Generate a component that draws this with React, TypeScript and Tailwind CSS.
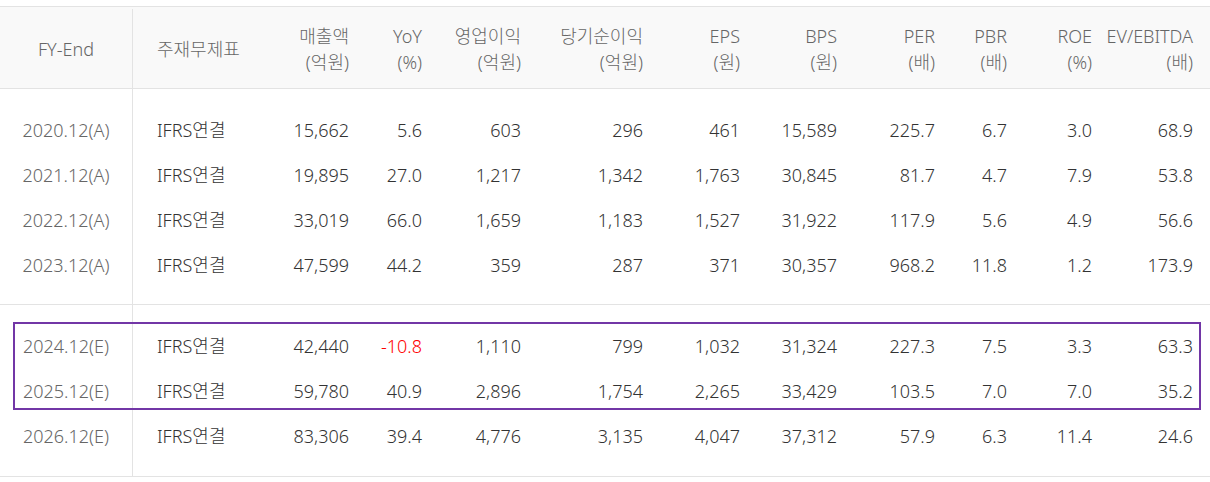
import React from "react";

const gridCols = "grid grid-cols-[133px_127px_89px_73px_99px_122px_97px_97px_98px_72px_85px_101px_17px]";

const headers: [string, string][] = [
  ["FY-End", ""],
  ["주재무제표", ""],
  ["매출액", "(억원)"],
  ["YoY", "(%)"],
  ["영업이익", "(억원)"],
  ["당기순이익", "(억원)"],
  ["EPS", "(원)"],
  ["BPS", "(원)"],
  ["PER", "(배)"],
  ["PBR", "(배)"],
  ["ROE", "(%)"],
  ["EV/EBITDA", "(배)"],
];

type Row = string[];
const groupA: Row[] = [
  ["2020.12(A)", "IFRS연결", "15,662", "5.6", "603", "296", "461", "15,589", "225.7", "6.7", "3.0", "68.9"],
  ["2021.12(A)", "IFRS연결", "19,895", "27.0", "1,217", "1,342", "1,763", "30,845", "81.7", "4.7", "7.9", "53.8"],
  ["2022.12(A)", "IFRS연결", "33,019", "66.0", "1,659", "1,183", "1,527", "31,922", "117.9", "5.6", "4.9", "56.6"],
  ["2023.12(A)", "IFRS연결", "47,599", "44.2", "359", "287", "371", "30,357", "968.2", "11.8", "1.2", "173.9"],
];
const groupB: Row[] = [
  ["2024.12(E)", "IFRS연결", "42,440", "-10.8", "1,110", "799", "1,032", "31,324", "227.3", "7.5", "3.3", "63.3"],
  ["2025.12(E)", "IFRS연결", "59,780", "40.9", "2,896", "1,754", "2,265", "33,429", "103.5", "7.0", "7.0", "35.2"],
  ["2026.12(E)", "IFRS연결", "83,306", "39.4", "4,776", "3,135", "4,047", "37,312", "57.9", "6.3", "11.4", "24.6"],
];

function DataRow({ r }: { r: Row }) {
  return (
    <div className={`${gridCols} h-[45px] items-center text-[18px] text-[#333]`}>
      <div className="text-center text-[#666] border-r border-[#e3e3e3] h-full flex items-center justify-center">{r[0]}</div>
      <div className="pl-[24px]">{r[1]}</div>
      {r.slice(2).map((v, i) => (
        <div key={i} className={`text-right ${v.startsWith("-") ? "text-[#ff0000]" : ""}`}>
          {v}
        </div>
      ))}
      <div />
    </div>
  );
}

function Spacer({ h }: { h: string }) {
  return (
    <div className={`${gridCols} ${h}`}>
      <div className="border-r border-[#e3e3e3]" />
    </div>
  );
}

export default function App() {
  return (
    <div
      className="w-[1210px] h-[482px] bg-white pt-[6px] font-light"
      style={{ fontFamily: '"Noto Sans", "Noto Sans CJK KR", sans-serif' }}
    >
      <div className="border-t border-[#e3e3e3]">
        <div className={`${gridCols} h-[82px] bg-[#f9f9f9] border-b border-[#e3e3e3] text-[18px] text-[#666] leading-[26px] pt-[2px]`}>
          <div className="border-r border-[#e3e3e3] flex items-center justify-center">{headers[0][0]}</div>
          <div className="flex items-center pl-[24px]">{headers[1][0]}</div>
          {headers.slice(2).map((h, i) => (
            <div key={i} className="flex flex-col justify-center items-end">
              <div>{h[0]}</div>
              <div>{h[1]}</div>
            </div>
          ))}
          <div />
        </div>
        <div className="border-b border-[#e3e3e3]">
          <Spacer h="h-[19px]" />
          {groupA.map((r, i) => (
            <DataRow key={i} r={r} />
          ))}
          <Spacer h="h-[16px]" />
        </div>
        <div className="relative border-b border-[#e3e3e3]">
          <Spacer h="h-[19px]" />
          {groupB.map((r, i) => (
            <DataRow key={i} r={r} />
          ))}
          <Spacer h="h-[17px]" />
          <div className="absolute left-[13px] right-[9px] top-[17px] h-[88px] border-2 border-[#7236a6] pointer-events-none" />
        </div>
      </div>
    </div>
  );
}
